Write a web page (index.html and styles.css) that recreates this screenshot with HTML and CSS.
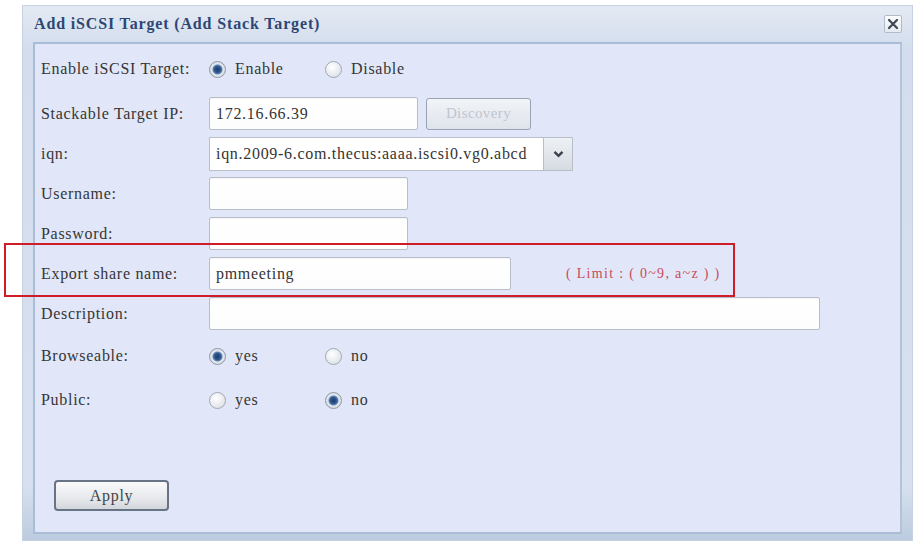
FILE: index.html
```html
<!DOCTYPE html>
<html lang="en">
  <head>
    <meta charset="UTF-8" />
    <title>Add iSCSI Target</title>
    <link rel="stylesheet" href="styles.css">
  </head>
  <body>
    <div class="window">
      <div class="window-header">
        <span class="window-title">Add iSCSI Target (Add Stack Target)</span>
        <span class="close-btn">
          <svg width="12" height="12" viewBox="0 0 12 12">
            <path d="M2 2 L10 10 M10 2 L2 10" stroke="#3f4652" stroke-width="2.2" stroke-linecap="round" />
          </svg>
        </span>
      </div>

      <div class="panel">
        <!-- enable / disable -->
        <div class="row row-first">
          <span class="label">Enable iSCSI Target:</span>
          <span class="opt"><span class="radio on"></span>Enable</span>
          <span class="opt"><span class="radio"></span>Disable</span>
        </div>

        <div class="row">
          <span class="label">Stackable Target IP:</span>
          <span class="field field-ip">172.16.66.39</span>
          <span class="btn-discovery">Discovery</span>
        </div>

        <div class="row">
          <span class="label">iqn:</span>
          <span class="select">
            <span class="select-text">iqn.2009-6.com.thecus:aaaa.iscsi0.vg0.abcd</span>
            <span class="select-arrow">
              <svg width="11" height="8" viewBox="0 0 11 8">
                <path d="M1.5 1.8 L5.5 5.8 L9.5 1.8" fill="none" stroke="#3a404c" stroke-width="2.4" />
              </svg>
            </span>
          </span>
        </div>

        <div class="row">
          <span class="label">Username:</span>
          <span class="field field-short"></span>
        </div>

        <div class="row">
          <span class="label">Password:</span>
          <span class="field field-short"></span>
        </div>

        <div class="row">
          <span class="label">Export share name:</span>
          <span class="field field-export">pmmeeting</span>
          <span class="limit">( Limit : ( 0~9, a~z ) )</span>
        </div>

        <div class="row">
          <span class="label">Description:</span>
          <span class="field field-long"></span>
        </div>

        <div class="row row-radio">
          <span class="label">Browseable:</span>
          <span class="opt"><span class="radio on"></span>yes</span>
          <span class="opt"><span class="radio"></span>no</span>
        </div>

        <div class="row row-radio">
          <span class="label">Public:</span>
          <span class="opt"><span class="radio"></span>yes</span>
          <span class="opt"><span class="radio on"></span>no</span>
        </div>

        <div class="actions">
          <span class="btn-apply">Apply</span>
        </div>
      </div>
    </div>

    <!-- red highlight annotation -->
    <div class="highlight"></div>
  </body>
</html>
```

FILE: styles.css
```css
/* Basic styling */
body {
  margin: 0;
  padding: 0;
  background-color: #ffffff;
  font-family: "Liberation Serif", "Times New Roman", serif;
  color: #353535;
  width: 914px;
  height: 542px;
  overflow: hidden;
  position: relative;
}

.window {
  margin: 5px 0 0 22px;
  width: 891px;
  height: 536px;
  box-sizing: border-box;
  padding: 0 10px 6px 10px;
  background: linear-gradient(#e4eaf3, #d3dded 8%, #d6e0ee 90%, #bccbdf);
  border: 1px solid #c6d2e2;
  display: flex;
  flex-direction: column;
}

.window-header {
  height: 36px;
  display: flex;
  align-items: center;
  justify-content: space-between;
  padding-left: 1px;
}

.window-title {
  font-weight: 700;
  font-size: 16px;
  letter-spacing: 0.85px;
  color: #2d4775;
}

.close-btn {
  width: 18px;
  height: 18px;
  box-sizing: border-box;
  border: 1px solid #b1bccb;
  border-radius: 2px;
  background: linear-gradient(#fbfcfd, #e6ebf1);
  display: flex;
  align-items: center;
  justify-content: center;
}

.panel {
  flex-grow: 1;
  background-color: #e1e7f8;
  border-top: 2px solid #a9bcd8;
  border-left: 2px solid #a9bcd8;
  border-right: 2px solid #b3c3da;
  border-bottom: 2px solid #aabcd6;
  padding: 8px 0 0 6px;
  font-size: 16px;
  letter-spacing: 0.7px;
}

/* form rows */
.row {
  display: flex;
  align-items: center;
  height: 33px;
  margin-bottom: 7px;
}

.row-first {
  height: 34px;
  margin-bottom: 11px;
}

.row-radio {
  height: 38px;
  margin-bottom: 6px;
}

.label {
  width: 168px;
  flex-shrink: 0;
}

.field {
  height: 100%;
  box-sizing: border-box;
  border: 1px solid #b8bfca;
  border-radius: 2px;
  background: linear-gradient(#ffffff, #fdfdfd);
  box-shadow: inset 0 1px 1px rgba(0, 0, 0, 0.05);
  display: flex;
  align-items: center;
  padding: 0 6px;
}

.field-ip {
  width: 209px;
}

.field-short {
  width: 199px;
}

.field-export {
  width: 302px;
}

.field-long {
  width: 611px;
}

.btn-discovery {
  margin-left: 8px;
  width: 105px;
  height: 32px;
  box-sizing: border-box;
  border: 1px solid #98a4b6;
  border-radius: 3px;
  background: linear-gradient(#f1f3f7, #dfe4ec);
  color: #bfc5cf;
  font-size: 15px;
  letter-spacing: 0.4px;
  display: flex;
  align-items: center;
  justify-content: center;
}

.select {
  display: flex;
  height: 34px;
}

.select-text {
  width: 334px;
  box-sizing: border-box;
  border: 1px solid #b8bfca;
  border-right: none;
  background-color: #ffffff;
  display: flex;
  align-items: center;
  padding: 0 6px;
  white-space: nowrap;
  overflow: hidden;
}

.select-arrow {
  width: 30px;
  box-sizing: border-box;
  border: 1px solid #b8bfca;
  background: linear-gradient(#eef1f5, #d6dbe2);
  display: flex;
  align-items: center;
  justify-content: center;
}

.limit {
  margin-left: 55px;
  font-size: 14px;
  letter-spacing: 1.3px;
  color: #c94a58;
}

/* radio buttons */
.opt {
  width: 116px;
  display: flex;
  align-items: center;
  gap: 9px;
}

.radio {
  width: 17px;
  height: 17px;
  box-sizing: border-box;
  border-radius: 50%;
  border: 1px solid #a0a8b5;
  background: radial-gradient(circle at 40% 35%, #ffffff, #d6dbe3);
  flex-shrink: 0;
}

.radio.on {
  border-color: #8d97a6;
  background: radial-gradient(circle, #1f3e6b 0, #2c5589 3px, #5e86b6 4.5px, #e4e8ee 5.5px, #c8cfd9 100%);
}

.actions {
  margin-top: 61px;
  padding-left: 13px;
}

.btn-apply {
  width: 115px;
  height: 31px;
  box-sizing: border-box;
  border: 2px solid #687385;
  border-radius: 4px;
  background: linear-gradient(#fafafb, #e6e8ec 60%, #d3d7dd);
  color: #444444;
  display: flex;
  align-items: center;
  justify-content: center;
}

/* 강조 표시 (annotation box) */
.highlight {
  position: absolute;
  left: 4px;
  top: 243px;
  width: 731px;
  height: 54px;
  box-sizing: border-box;
  border: 2px solid #cf1d28;
}
```
